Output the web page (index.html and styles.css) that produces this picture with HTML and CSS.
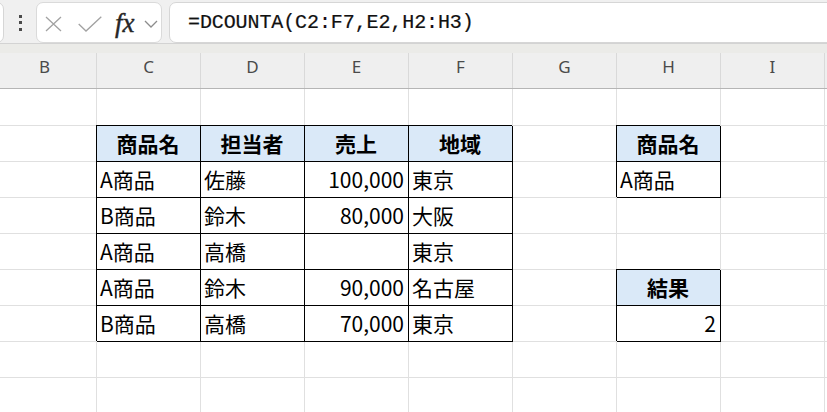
FILE: index.html
```html
<!DOCTYPE html>
<html lang="ja">
<head>
<meta charset="utf-8">
<link rel="stylesheet" href="styles.css">
</head>
<body>
<div class="toolbar">
  <div class="stub"></div>
  <div class="dots"><i></i><i></i><i></i></div>
  <div class="fxbox">
    <svg class="ic-x" width="17" height="16" viewBox="0 0 17 16"><path d="M1 1 L16 15 M16 1 L1 15"/></svg>
    <svg class="ic-check" width="24" height="16" viewBox="0 0 24 16"><path d="M0.7 8 L8 15 L23.3 0.7"/></svg>
    <span class="fx">fx</span>
    <svg class="ic-chev" width="14" height="8" viewBox="0 0 14 8"><path d="M1 1 L7 7 L13 1"/></svg>
  </div>
  <div class="formula">=DCOUNTA(C2:F7,E2,H2:H3)</div>
</div>
<div class="band"></div>
<div class="colhead">
  <div>B</div><div>C</div><div>D</div><div>E</div><div>F</div><div>G</div><div>H</div><div>I</div><div></div>
</div>
<div class="sheet">
  <!-- row 1 -->
  <div class="c"></div><div class="c"></div><div class="c"></div><div class="c"></div><div class="c"></div><div class="c"></div><div class="c"></div><div class="c"></div><div class="c"></div>
  <!-- row 2 -->
  <div class="c"></div><div class="c t h">商品名</div><div class="c t h">担当者</div><div class="c t h">売上</div><div class="c t h">地域</div><div class="c"></div><div class="c t h">商品名</div><div class="c"></div><div class="c"></div>
  <!-- row 3 -->
  <div class="c"></div><div class="c t">A商品</div><div class="c t">佐藤</div><div class="c t r">100,000</div><div class="c t">東京</div><div class="c"></div><div class="c t">A商品</div><div class="c"></div><div class="c"></div>
  <!-- row 4 -->
  <div class="c"></div><div class="c t">B商品</div><div class="c t">鈴木</div><div class="c t r">80,000</div><div class="c t">大阪</div><div class="c"></div><div class="c"></div><div class="c"></div><div class="c"></div>
  <!-- row 5 -->
  <div class="c"></div><div class="c t">A商品</div><div class="c t">高橋</div><div class="c t r"></div><div class="c t">東京</div><div class="c"></div><div class="c"></div><div class="c"></div><div class="c"></div>
  <!-- row 6 -->
  <div class="c"></div><div class="c t">A商品</div><div class="c t">鈴木</div><div class="c t r">90,000</div><div class="c t">名古屋</div><div class="c"></div><div class="c t h">結果</div><div class="c"></div><div class="c"></div>
  <!-- row 7 -->
  <div class="c"></div><div class="c t">B商品</div><div class="c t">高橋</div><div class="c t r">70,000</div><div class="c t">東京</div><div class="c"></div><div class="c t r">2</div><div class="c"></div><div class="c"></div>
  <!-- row 8 -->
  <div class="c"></div><div class="c"></div><div class="c"></div><div class="c"></div><div class="c"></div><div class="c"></div><div class="c"></div><div class="c"></div><div class="c"></div>
  <!-- row 9 -->
  <div class="c"></div><div class="c"></div><div class="c"></div><div class="c"></div><div class="c"></div><div class="c"></div><div class="c"></div><div class="c"></div><div class="c"></div>
</div>
</body>
</html>
```
FILE: styles.css
```css
* { box-sizing: border-box; }
html, body {
  margin: 0;
  padding: 0;
  width: 827px;
  height: 412px;
  overflow: hidden;
  background: #ffffff;
  font-family: "Noto Sans CJK JP", "Noto Sans", sans-serif;
}

/* formula bar */
.toolbar {
  display: flex;
  align-items: flex-start;
  height: 44px;
  padding-top: 2px;
  background: #f0f0f0;
  border-bottom: 1px solid #d3d3d3;
}
.stub {
  width: 24px;
  height: 41px;
  margin-left: -20px;
  background: #ffffff;
  border: 1px solid #d6d6d6;
  border-radius: 7px;
}
.dots {
  width: 32px;
  height: 41px;
  display: flex;
  flex-direction: column;
  align-items: center;
  justify-content: center;
  gap: 3.5px;
}
.dots i {
  display: block;
  width: 3px;
  height: 3px;
  background: #4a4a4a;
}
.fxbox {
  width: 126px;
  height: 41px;
  background: #ffffff;
  border: 1px solid #dadada;
  border-radius: 7px;
  display: flex;
  align-items: flex-start;
}
.fxbox svg path {
  fill: none;
  stroke: #a2a2a2;
  stroke-width: 1.3;
}
.ic-x { margin: 13px 0 0 8px; }
.ic-check { margin: 13px 0 0 16px; }
.fx {
  display: block;
  width: 24px;
  margin: 7px 0 0 13px;
  font-family: "Liberation Serif", serif;
  font-style: italic;
  font-size: 27px;
  line-height: 27px;
  color: #262626;
  -webkit-text-stroke: 0.4px #262626;
}
.ic-chev { margin: 17px 0 0 5px; }
.fxbox .ic-chev path { stroke: #8c8c8c; }
.formula {
  flex: 1;
  height: 41px;
  margin-left: 7px;
  margin-right: -20px;
  padding-left: 18px;
  background: #ffffff;
  border: 1px solid #d6d6d6;
  border-radius: 7px;
  font-family: "Liberation Mono", monospace;
  font-size: 20px;
  letter-spacing: -0.1px;
  line-height: 39px;
  color: #111111;
  -webkit-text-stroke: 0.2px #111111;
}

.band {
  height: 9px;
  background: #ebebe8;
}

/* column headers */
.colhead {
  display: grid;
  grid-template-columns: repeat(9, 104px);
  margin-left: -7px;
  height: 36px;
  background: #efefef;
  border-bottom: 1px solid #b5b5b5;
}
.colhead div {
  display: flex;
  align-items: center;
  justify-content: center;
  padding-bottom: 8px;
  border-right: 1px solid #d9d9d9;
  font-family: "Noto Sans", sans-serif;
  font-size: 17px;
  color: #4a4a4a;
}

/* sheet grid */
.sheet {
  display: grid;
  grid-template-columns: repeat(9, 104px);
  grid-template-rows: 37px repeat(8, 36px);
  margin-left: -7px;
}
.c {
  display: flex;
  align-items: center;
  padding: 0 4px 2px 3px;
  border-right: 1px solid #e0e0e0;
  border-bottom: 1px solid #e0e0e0;
  font-size: 21px;
  color: #000000;
  white-space: nowrap;
}
.t {
  border-right-color: #000000;
  border-bottom-color: #000000;
  box-shadow: -1px -1px 0 #000000;
}
.h {
  justify-content: center;
  font-weight: 700;
  background: #dae9f8;
}
.r {
  justify-content: flex-end;
}
```
